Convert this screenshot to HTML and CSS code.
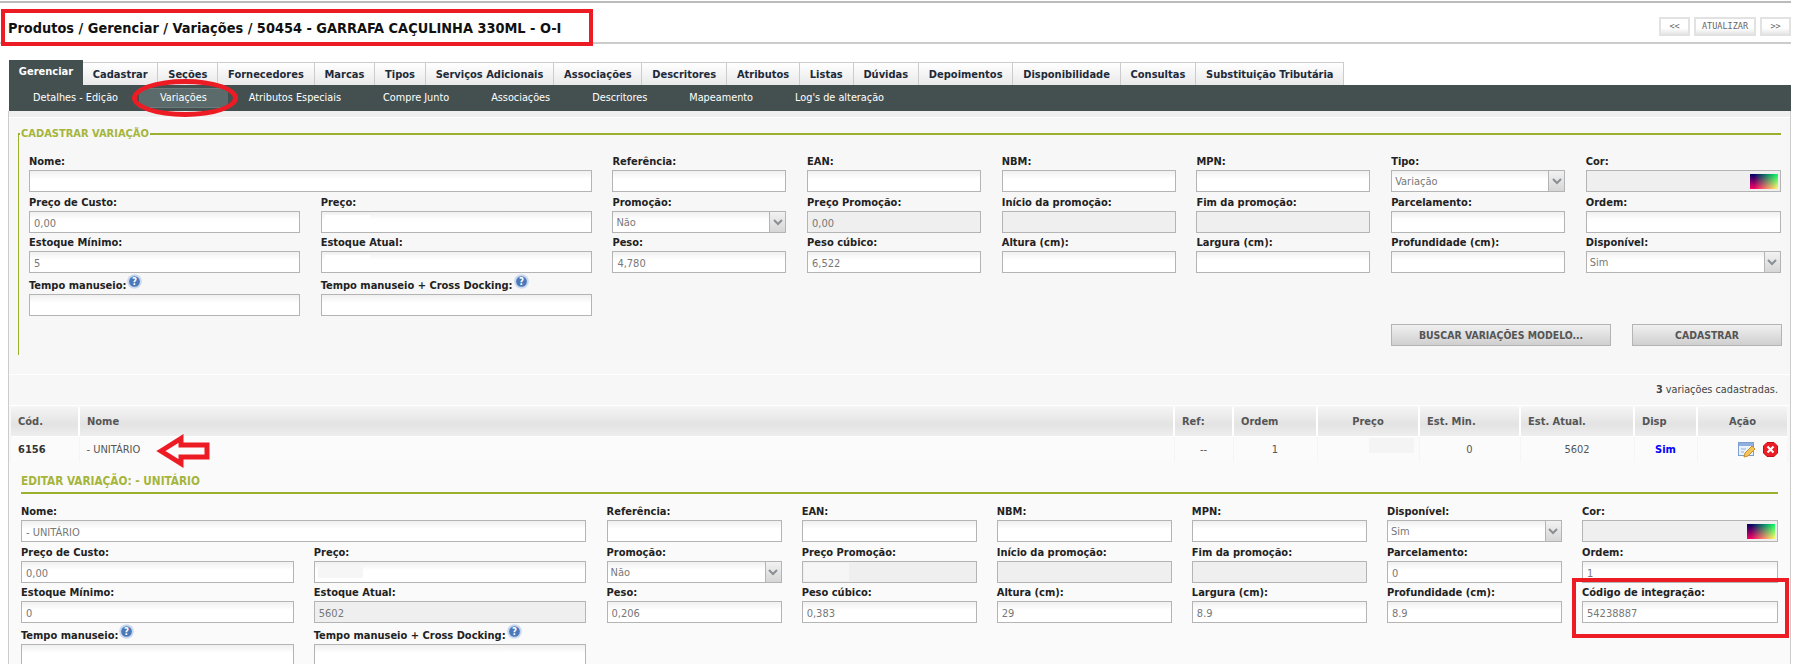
FILE: index.html
```html
<!DOCTYPE html>
<html lang="pt-BR">
<head>
    <meta charset="UTF-8">
    <title>Produtos - Variações</title>
    <link rel="stylesheet" href="styles.css">
</head>
<body>
    <div class="header">
        <h1 class="title">Produtos / Gerenciar / Variações / 50454 - GARRAFA CAÇULINHA 330ML - O-I</h1>
        <div class="pager">
            <button class="pager-btn pager-arrow">&lt;&lt;</button>
            <button class="pager-btn pager-update">ATUALIZAR</button>
            <button class="pager-btn pager-arrow">&gt;&gt;</button>
        </div>
    </div>

    <ul class="tabs">
        <li class="tab active">Gerenciar</li>
        <li class="tab">Cadastrar</li>
        <li class="tab">Seções</li>
        <li class="tab">Fornecedores</li>
        <li class="tab">Marcas</li>
        <li class="tab">Tipos</li>
        <li class="tab">Serviços Adicionais</li>
        <li class="tab">Associações</li>
        <li class="tab">Descritores</li>
        <li class="tab">Atributos</li>
        <li class="tab">Listas</li>
        <li class="tab">Dúvidas</li>
        <li class="tab">Depoimentos</li>
        <li class="tab">Disponibilidade</li>
        <li class="tab">Consultas</li>
        <li class="tab">Substituição Tributária</li>
    </ul>
    <ul class="subtabs">
        <li class="subtab">Detalhes - Edição</li>
        <li class="subtab active">Variações</li>
        <li class="subtab">Atributos Especiais</li>
        <li class="subtab">Compre Junto</li>
        <li class="subtab">Associações</li>
        <li class="subtab">Descritores</li>
        <li class="subtab">Mapeamento</li>
        <li class="subtab">Log's de alteração</li>
    </ul>

    <div class="panel">
        <div class="panel-strip"></div>
        <fieldset class="new-box">
            <legend>CADASTRAR VARIAÇÃO</legend>
            <div class="form-grid">
                <div class="field span-2"><label>Nome:</label><input type="text"></div>
                <div class="field"><label>Referência:</label><input type="text"></div>
                <div class="field"><label>EAN:</label><input type="text"></div>
                <div class="field"><label>NBM:</label><input type="text"></div>
                <div class="field"><label>MPN:</label><input type="text"></div>
                <div class="field"><label>Tipo:</label>
                    <div class="select"><select><option>Variação</option></select><span class="select-arrow"><svg width="10" height="7" viewBox="0 0 10 7"><path d="M1 1l4 4 4-4" fill="none" stroke="#8a8f94" stroke-width="2"/></svg></span></div>
                </div>
                <div class="field"><label>Cor:</label><div class="color"><span class="swatch"></span></div></div>

                <div class="field"><label>Preço de Custo:</label><input type="text" value="0,00"></div>
                <div class="field"><label>Preço:</label><div class="masked"><input type="text"><span class="blur blur-white"></span></div></div>
                <div class="field"><label>Promoção:</label>
                    <div class="select"><select><option>Não</option></select><span class="select-arrow"><svg width="10" height="7" viewBox="0 0 10 7"><path d="M1 1l4 4 4-4" fill="none" stroke="#8a8f94" stroke-width="2"/></svg></span></div>
                </div>
                <div class="field"><label>Preço Promoção:</label><input type="text" class="off" value="0,00"></div>
                <div class="field"><label>Início da promoção:</label><input type="text" class="off"></div>
                <div class="field"><label>Fim da promoção:</label><input type="text" class="off"></div>
                <div class="field"><label>Parcelamento:</label><input type="text"></div>
                <div class="field"><label>Ordem:</label><input type="text"></div>

                <div class="field"><label>Estoque Mínimo:</label><input type="text" value="5"></div>
                <div class="field"><label>Estoque Atual:</label><div class="masked"><input type="text"><span class="blur blur-white"></span></div></div>
                <div class="field"><label>Peso:</label><input type="text" value="4,780"></div>
                <div class="field"><label>Peso cúbico:</label><input type="text" value="6,522"></div>
                <div class="field"><label>Altura (cm):</label><input type="text"></div>
                <div class="field"><label>Largura (cm):</label><input type="text"></div>
                <div class="field"><label>Profundidade (cm):</label><input type="text"></div>
                <div class="field"><label>Disponível:</label>
                    <div class="select"><select><option>Sim</option></select><span class="select-arrow"><svg width="10" height="7" viewBox="0 0 10 7"><path d="M1 1l4 4 4-4" fill="none" stroke="#8a8f94" stroke-width="2"/></svg></span></div>
                </div>

                <div class="field"><label>Tempo manuseio:<svg class="help" width="15" height="15" viewBox="0 0 14 14"><circle cx="7" cy="7" r="6.800" fill="#c9d8ee"/><circle cx="7" cy="7" r="5" fill="#4a78b8"/><text x="7" y="10" text-anchor="middle" class="help-mark">?</text></svg></label><input type="text"></div>
                <div class="field"><label>Tempo manuseio + Cross Docking:<svg class="help" width="15" height="15" viewBox="0 0 14 14"><circle cx="7" cy="7" r="6.800" fill="#c9d8ee"/><circle cx="7" cy="7" r="5" fill="#4a78b8"/><text x="7" y="10" text-anchor="middle" class="help-mark">?</text></svg></label><input type="text"></div>
            </div>
            <div class="actions">
                <button class="btn btn-search">BUSCAR VARIAÇÕES MODELO...</button>
                <button class="btn btn-save">CADASTRAR</button>
            </div>
        </fieldset>

        <div class="total"><b>3</b> variações cadastradas.</div>

        <table class="list">
            <colgroup>
                <col class="c-cod"><col class="c-name"><col class="c-ref"><col class="c-order"><col class="c-price"><col class="c-min"><col class="c-cur"><col class="c-disp"><col class="c-act">
            </colgroup>
            <thead>
                <tr>
                    <th>Cód.</th><th>Nome</th><th>Ref:</th><th>Ordem</th><th class="center">Preço</th><th>Est. Min.</th><th>Est. Atual.</th><th>Disp</th><th class="center">Ação</th>
                </tr>
            </thead>
            <tbody>
                <tr>
                    <td class="code">6156</td>
                    <td>- UNITÁRIO</td>
                    <td class="center">--</td>
                    <td class="center">1</td>
                    <td class="cell-price"><span class="blur blur-price"></span></td>
                    <td class="center">0</td>
                    <td class="center">5602</td>
                    <td class="center yes">Sim</td>
                    <td class="cell-actions">
                        <svg width="17" height="16" viewBox="0 0 17 16"><rect x="0.5" y="0.5" width="15" height="13" fill="#eaf1fb" stroke="#7d9fd0"/><rect x="1" y="1" width="14" height="3" fill="#8fb0de"/><path d="M3 7h5M3 10h3" stroke="#8fb0de"/><path d="M6 15l1-4 7-7 3 3-7 7z" fill="#f3c65a" stroke="#c98f2c"/></svg>
                        <svg width="15" height="15" viewBox="0 0 15 15"><path d="M4 .5h7L14.500 4v7L11 14.500H4L.5 11V4z" fill="#ee1c25" stroke="#c41018"/><path d="M4.500 4.500l6 6M10.500 4.500l-6 6" stroke="#fff" stroke-width="2.200"/></svg>
                    </td>
                </tr>
            </tbody>
        </table>

        <div class="edit-box">
            <h3 class="edit-title">EDITAR VARIAÇÃO: - UNITÁRIO</h3>
            <div class="form-grid edit-grid">
                <div class="field span-2"><label>Nome:</label><input type="text" value="- UNITÁRIO"></div>
                <div class="field"><label>Referência:</label><input type="text"></div>
                <div class="field"><label>EAN:</label><input type="text"></div>
                <div class="field"><label>NBM:</label><input type="text"></div>
                <div class="field"><label>MPN:</label><input type="text"></div>
                <div class="field"><label>Disponível:</label>
                    <div class="select"><select><option>Sim</option></select><span class="select-arrow"><svg width="10" height="7" viewBox="0 0 10 7"><path d="M1 1l4 4 4-4" fill="none" stroke="#8a8f94" stroke-width="2"/></svg></span></div>
                </div>
                <div class="field"><label>Cor:</label><div class="color"><span class="swatch"></span></div></div>

                <div class="field"><label>Preço de Custo:</label><input type="text" value="0,00"></div>
                <div class="field"><label>Preço:</label><div class="masked"><input type="text"><span class="blur blur-gray"></span></div></div>
                <div class="field"><label>Promoção:</label>
                    <div class="select"><select><option>Não</option></select><span class="select-arrow"><svg width="10" height="7" viewBox="0 0 10 7"><path d="M1 1l4 4 4-4" fill="none" stroke="#8a8f94" stroke-width="2"/></svg></span></div>
                </div>
                <div class="field"><label>Preço Promoção:</label><div class="masked"><input type="text" class="off"><span class="blur blur-off"></span></div></div>
                <div class="field"><label>Início da promoção:</label><input type="text" class="off"></div>
                <div class="field"><label>Fim da promoção:</label><input type="text" class="off"></div>
                <div class="field"><label>Parcelamento:</label><input type="text" value="0"></div>
                <div class="field"><label>Ordem:</label><input type="text" value="1"></div>

                <div class="field"><label>Estoque Mínimo:</label><input type="text" value="0"></div>
                <div class="field"><label>Estoque Atual:</label><input type="text" class="off" value="5602"></div>
                <div class="field"><label>Peso:</label><input type="text" value="0,206"></div>
                <div class="field"><label>Peso cúbico:</label><input type="text" value="0,383"></div>
                <div class="field"><label>Altura (cm):</label><input type="text" value="29"></div>
                <div class="field"><label>Largura (cm):</label><input type="text" value="8.9"></div>
                <div class="field"><label>Profundidade (cm):</label><input type="text" value="8.9"></div>
                <div class="field"><label>Código de integração:</label><input type="text" value="54238887"></div>

                <div class="field"><label>Tempo manuseio:<svg class="help" width="15" height="15" viewBox="0 0 14 14"><circle cx="7" cy="7" r="6.800" fill="#c9d8ee"/><circle cx="7" cy="7" r="5" fill="#4a78b8"/><text x="7" y="10" text-anchor="middle" class="help-mark">?</text></svg></label><input type="text"></div>
                <div class="field"><label>Tempo manuseio + Cross Docking:<svg class="help" width="15" height="15" viewBox="0 0 14 14"><circle cx="7" cy="7" r="6.800" fill="#c9d8ee"/><circle cx="7" cy="7" r="5" fill="#4a78b8"/><text x="7" y="10" text-anchor="middle" class="help-mark">?</text></svg></label><input type="text"></div>
            </div>
        </div>
    </div>

    <!-- red marks drawn on top of the screen -->
    <div class="mark mark-title"></div>
    <div class="mark mark-tab"></div>
    <div class="mark mark-code"></div>
    <svg class="mark-arrow" width="56" height="34" viewBox="0 0 56 34"><path d="M5 17L25 4.500V11H51V23H25V29.500Z" fill="none" stroke="#ed1c24" stroke-width="5"/></svg>
</body>
</html>
```

FILE: styles.css
```css
html, body {
    height: 664px;
    overflow: hidden;
}
body {
    margin: 0;
    position: relative;
    background: #fff;
    font-family: "DejaVu Sans Condensed", "DejaVu Sans", sans-serif;
    font-stretch: condensed;
    font-size: 11px;
    color: #222;
}
ul {
    list-style: none;
    margin: 0;
    padding: 0;
}

/* header */
.header {
    display: flex;
    align-items: center;
    justify-content: space-between;
    box-sizing: border-box;
    height: 43px;
    margin: 1px 7px 0 0;
    padding: 10px 0 0 8px;
    border-top: 2px solid #bbb;
    border-bottom: 2px solid #ccc;
}
.title {
    margin: 0;
    font-size: 14.400px;
    font-weight: bold;
    color: #111;
}
.pager {
    display: flex;
    gap: 4px;
    margin-top: -3px;
}
.pager-btn {
    height: 19px;
    padding: 0;
    border: 2px solid #e2e2e2;
    background: linear-gradient(#fff, #fff 60%, #e6e6e6);
    font-family: "DejaVu Sans Mono", monospace;
    font-size: 8.500px;
    color: #666;
}
.pager-arrow {
    width: 31px;
}
.pager-update {
    width: 62px;
}

/* tabs */
.tabs {
    display: flex;
    align-items: flex-end;
    height: 25px;
    margin: 16px 0 0 9px;
}
.tab {
    box-sizing: border-box;
    height: 23px;
    padding: 0 9.850px;
    line-height: 23px;
    border: 1px solid #ccc;
    border-left: 0;
    border-bottom: 0;
    background: linear-gradient(#fff, #e9e9e9);
    font-weight: bold;
    color: #1d2a3a;
    white-space: nowrap;
}
.tab.active {
    height: 25px;
    line-height: 24px;
    border: 0;
    background: #445050;
    color: #fff;
}
.subtabs {
    display: flex;
    align-items: center;
    height: 26px;
    margin: 0 7px 0 9px;
    padding-left: 3px;
    background: #445050;
}
.subtab {
    padding: 0 21px;
    line-height: 18px;
    font-size: 10.800px;
    color: #fff;
    white-space: nowrap;
}
.subtab.active {
    background: #5b6b6b;
    border-top: 1px solid #6c7c7c;
    border-bottom: 1px solid #6c7c7c;
}

/* main panel */
.panel {
    margin: 0 7px 0 8px;
    border-left: 1px solid #ccc;
    border-right: 1px solid #ccc;
    background: #f7f7f7;
}
.panel-strip {
    height: 6px;
    border-bottom: 1px solid #fff;
    background: #efefef;
}
.new-box {
    min-width: 0;
    margin: 9px 9px 0;
    padding: 10px 9px 9px 10px;
    border: 0;
    border-top: 2px solid #9db02e;
    border-left: 1px solid #9db02e;
}
.new-box legend {
    margin-left: -9px;
    padding: 0 1px;
    line-height: 14px;
    font-size: 11px;
    font-weight: bold;
    color: #a5b53c;
}

/* form */
.form-grid {
    display: grid;
    grid-template-columns: 271px 271px repeat(5, 174px) 195px;
    grid-template-rows: 41px 41px 40px 43px;
    column-gap: 20.700px;
    margin-right: -9px;
}
.edit-grid {
    grid-template-columns: 272.700px 272.700px repeat(5, 175px) 196px;
    column-gap: 20.100px;
    margin: 7px 0 0;
}
.field {
    align-self: end;
    min-width: 0;
}
.span-2 {
    grid-column: span 2;
}
.field label {
    display: block;
    height: 18px;
    line-height: 20px;
    font-weight: bold;
    color: #222;
    white-space: nowrap;
}
.help {
    margin: -15px 0 0 1px;
}
.help-mark {
    font-size: 9px;
    font-weight: bold;
    fill: #fff;
}
.field input, .select, .color {
    display: block;
    box-sizing: border-box;
    width: 100%;
    height: 22px;
    border: 1px solid #b4b4b4;
}
.field input {
    padding: 3px 4px 0;
    background: linear-gradient(#f0f0f0, #fff 40%);
    font-family: inherit;
    font-stretch: condensed;
    font-size: 11px;
    color: #777;
}
.field input.off {
    background: #efefef;
}
.select {
    display: flex;
    background: linear-gradient(#f0f0f0, #fff 40%);
}
.select select {
    flex: 1;
    min-width: 0;
    padding: 0 3px;
    border: 0;
    appearance: none;
    background: transparent;
    font-family: inherit;
    font-stretch: condensed;
    font-size: 11px;
    color: #777;
}
.select-arrow {
    display: flex;
    align-items: center;
    justify-content: center;
    width: 15px;
    border-left: 1px solid #b4b4b4;
    background: linear-gradient(#f2f2f2, #d6d6d6);
}
.color {
    display: flex;
    justify-content: flex-end;
    align-items: center;
    padding-right: 2px;
    background: #efefef;
}
.swatch {
    width: 28px;
    height: 15px;
    background: linear-gradient(to right, #000, #000 15%, #0f0), linear-gradient(to bottom, #006, #f06);
    background-blend-mode: screen;
}
.masked {
    position: relative;
}
.blur {
    position: absolute;
    top: 4px;
    left: 4px;
    width: 45px;
    height: 13px;
}
.blur-white {
    background: #fff;
}
.blur-gray {
    background: #f6f6f6;
}
.blur-off {
    top: 2px;
    left: 2px;
    height: 18px;
    background: #f6f6f6;
}

/* buttons */
.actions {
    display: flex;
    justify-content: flex-end;
    gap: 21px;
    margin: 8px -10px 0 0;
}
.btn {
    height: 22px;
    border: 1px solid #b4b4b4;
    background: linear-gradient(#f0f0f0, #cfcfcf);
    font-family: inherit;
    font-stretch: condensed;
    font-size: 10.400px;
    font-weight: bold;
    color: #555;
}
.btn-search {
    width: 220px;
}
.btn-save {
    width: 150px;
}

/* list */
.total {
    margin-top: 19px;
    padding-right: 12px;
    height: 30px;
    line-height: 30px;
    font-size: 10.800px;
    border-top: 1px solid #fff;
    border-bottom: 1px solid #fff;
    text-align: right;
    color: #444;
}
.list {
    width: 1776px;
    margin: 1px 0 0 2px;
    table-layout: fixed;
    border-collapse: collapse;
}
.c-cod { width: 68px; }
.c-name { width: 1095px; }
.c-ref { width: 59px; }
.c-order { width: 84px; }
.c-price { width: 102px; }
.c-min { width: 101px; }
.c-cur { width: 114px; }
.c-disp { width: 63px; }
.c-act { width: 90px; }
.list th {
    height: 29px;
    padding: 0 7px;
    text-align: left;
    border-left: 2px solid #fff;
    border-bottom: 1px solid #fff;
    background: linear-gradient(#f4f4f4, #e3e3e3 60%, #eee);
    font-weight: bold;
    color: #555;
}
.list th:first-child {
    border-left: 0;
}
.list th.center {
    text-align: center;
}
.list td {
    height: 25px;
    padding: 0 7px;
    border-left: 1px solid #f5f5f5;
    background: #fbfbfb;
    color: #555;
}
.list td:first-child {
    border-left: 0;
}
.list td.center {
    text-align: center;
}
.list td.code {
    font-weight: bold;
    color: #333;
}
.list td.yes {
    font-weight: bold;
    color: #00f;
}
.cell-price {
    position: relative;
}
.blur-price {
    top: 1px;
    left: 51px;
    height: 15px;
    background: #f4f4f4;
}
.cell-actions {
    text-align: right;
}
.list td.cell-actions {
    padding-right: 9px;
}
.cell-actions svg {
    vertical-align: middle;
    margin-left: 5px;
}

/* edit block */
.edit-box {
    height: 220px;
    padding: 0 12px;
    background: #fafafa;
}
.edit-title {
    height: 30px;
    margin: 0;
    line-height: 38px;
    border-bottom: 2px solid #9db02e;
    font-size: 11.700px;
    font-weight: bold;
    color: #a5b53c;
}

/* red marks */
.mark {
    position: absolute;
    box-sizing: border-box;
    border: 4px solid #ed1c24;
}
.mark-title {
    left: 1px;
    top: 9px;
    width: 592px;
    height: 37px;
}
.mark-tab {
    left: 132px;
    top: 79px;
    width: 106px;
    height: 38px;
    border-width: 5px;
    border-radius: 50%;
}
.mark-code {
    left: 1572px;
    top: 578px;
    width: 217px;
    height: 60px;
}
.mark-arrow {
    position: absolute;
    left: 156px;
    top: 434px;
}
```
